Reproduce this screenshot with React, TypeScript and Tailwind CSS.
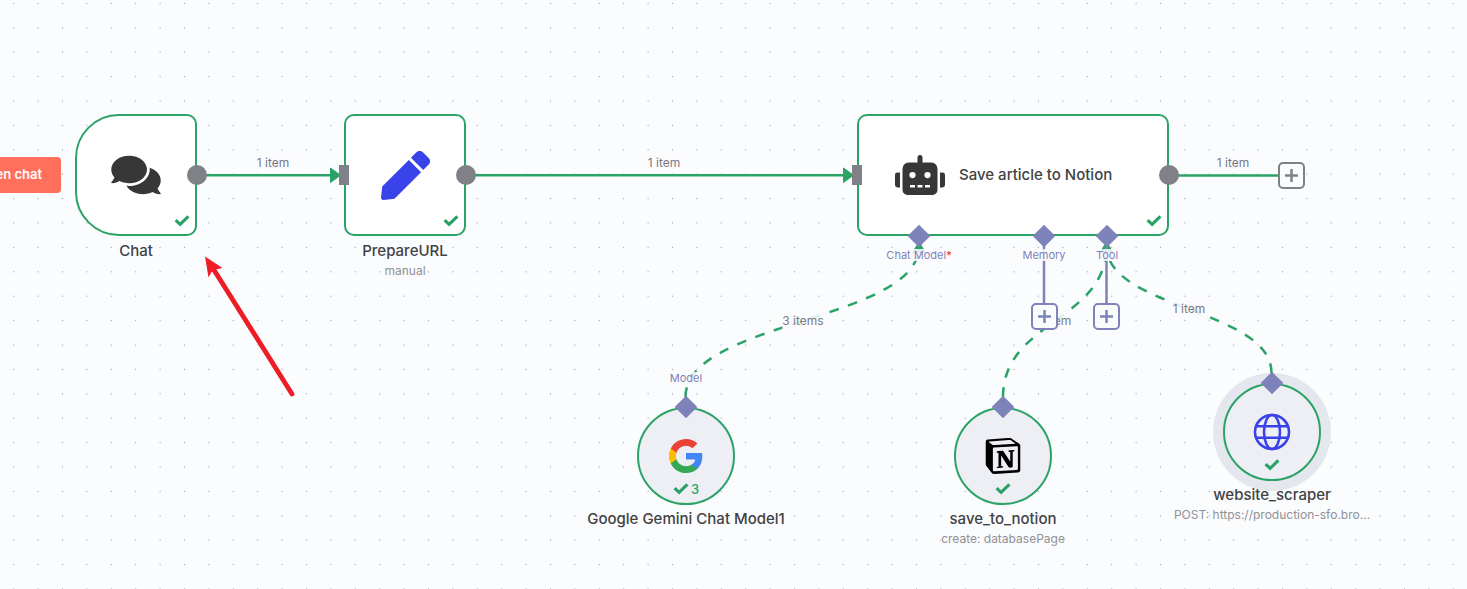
import type { ReactNode } from 'react';
import { FaComments, FaPen, FaRobot } from 'react-icons/fa';
import { SiNotion } from 'react-icons/si';

const GREEN = '#2ba366';

function Check() {
  return (
    <svg className="h-3 w-4" viewBox="0 0 16 12" fill="none" stroke={GREEN} strokeWidth="3.2" aria-hidden="true">
      <path d="M1.6 5.2 6.1 9.4 14.4 1.4" />
    </svg>
  );
}

function GoogleLogo() {
  return (
    <svg className="size-[34px]" viewBox="1 1 22 22" aria-hidden="true">
      <path fill="#4285F4" d="M22.56 12.25c0-.78-.07-1.53-.2-2.25H12v4.26h5.92c-.26 1.37-1.04 2.53-2.21 3.31v2.77h3.57c2.08-1.92 3.28-4.74 3.28-8.09z" />
      <path fill="#34A853" d="M12 23c2.97 0 5.46-.98 7.28-2.66l-3.57-2.77c-.98.66-2.23 1.06-3.71 1.06-2.86 0-5.29-1.93-6.16-4.53H2.18v2.84C3.99 20.53 7.7 23 12 23z" />
      <path fill="#FBBC05" d="M5.84 14.09c-.22-.66-.35-1.36-.35-2.09s.13-1.43.35-2.09V7.07H2.18C1.43 8.55 1 10.22 1 12s.43 3.45 1.18 4.93l2.85-2.22.81-.62z" />
      <path fill="#EA4335" d="M12 5.38c1.62 0 3.06.56 4.21 1.64l3.15-3.15C17.45 2.09 14.97 1 12 1 7.7 1 3.99 3.47 2.18 7.07l3.66 2.84c.87-2.6 3.3-4.53 6.16-4.53z" />
    </svg>
  );
}

function Globe() {
  return (
    <svg className="size-[38px]" viewBox="0 0 38 38" fill="none" stroke="#3a42e9" strokeWidth="2.6" aria-hidden="true">
      <circle cx="19" cy="19" r="17" />
      <ellipse cx="19" cy="19" rx="8" ry="17" />
      <path d="M2.8 13.3h32.4M2.8 24.7h32.4" />
    </svg>
  );
}

function Edges() {
  return (
    <svg className="absolute inset-0 h-full w-full" fill="none" aria-hidden="true">
      <defs>
        <pattern id="dots" x="1.5" y="-8.8" width="24.4" height="24.4" patternUnits="userSpaceOnUse">
          <circle cx="12.2" cy="12.2" r="0.65" fill="#a3a5ab" />
        </pattern>
      </defs>
      <rect width="100%" height="100%" fill="url(#dots)" />
      <g stroke={GREEN} strokeWidth="2.5">
        <path d="M198 175.2H334M466 175.2H846M1169 175.5H1279" />
        <g strokeDasharray="9.76 9.76">
          <path d="M685.5 397C685.5 321 919 321 919 246" />
          <path d="M1003 397C1003 321 1106.5 321 1106.5 246" />
          <path d="M1271.5 373C1271.5 309 1106.5 309 1106.5 246" />
        </g>
      </g>
      <g fill={GREEN} stroke={GREEN} strokeWidth="1" strokeLinejoin="round">
        <path d="M330.5 168v14.5L340.5 175.2ZM843.5 168v14.5L853.5 175.2Z" />
        <path d="M919 242 912.5 252.5H925.5ZM1106.5 242 1100 252.5H1113Z" />
      </g>
      <path d="M1044 240V304M1106.5 240V304" stroke="#7d82b8" strokeWidth="2.5" />
    </svg>
  );
}

function EdgeLabel({ place, children }: { place: string; children: ReactNode }) {
  return (
    <span className={`absolute -translate-x-1/2 -translate-y-1/2 whitespace-nowrap bg-[#fbfcfe]/85 text-xs text-[#77797f] ${place}`}>
      {children}
    </span>
  );
}

function PortLabel({ place, children }: { place: string; children: ReactNode }) {
  return (
    <span className={`absolute -translate-x-1/2 -translate-y-1/2 whitespace-nowrap bg-[#fbfcfe]/85 text-[11px] leading-3 text-[#7d82b8] ${place}`}>
      {children}
    </span>
  );
}

function Diamond({ place }: { place: string }) {
  return <span className={`absolute size-4 -translate-x-1/2 -translate-y-1/2 rotate-45 bg-[#7d82b8] ${place}`} />;
}

function OutPort({ place }: { place: string }) {
  return <span className={`absolute size-5 rounded-full bg-[#7f8187] ${place}`} />;
}

function InPort({ place }: { place: string }) {
  return <span className={`absolute h-5 w-[10px] bg-[#7f8187] ${place}`} />;
}

function AddButton({ label, place }: { label: string; place: string }) {
  return (
    <button
      type="button"
      aria-label={label}
      className={`absolute flex size-[27px] items-center justify-center rounded-[5px] border-2 border-current bg-[#fbfcfe] ${place}`}
    >
      <svg className="size-[13px]" viewBox="0 0 13 13" fill="none" stroke="currentColor" strokeWidth="2.5" aria-hidden="true">
        <path d="M6.5 0v13M0 6.5h13" />
      </svg>
    </button>
  );
}

function Caption({ title, note }: { title: string; note?: string }) {
  return (
    <div className="flex flex-col items-center whitespace-nowrap">
      <h2 className="text-[15px] font-medium leading-5 text-[#414244]">{title}</h2>
      {note && <p className="text-xs leading-5 text-[#8f9197]">{note}</p>}
    </div>
  );
}

function SquareNode({ place, shape, title, note, children }: { place: string; shape: string; title: string; note?: string; children: ReactNode }) {
  return (
    <section className={`absolute flex w-[122px] flex-col items-center gap-[5px] ${place}`}>
      <div className={`relative flex h-[122px] w-full items-center justify-center border-2 border-[#2ba366] bg-white ${shape}`}>
        {children}
        <span className="absolute bottom-[7px] right-[5px]"><Check /></span>
      </div>
      <Caption title={title} note={note} />
    </section>
  );
}

function RoundNode({ place, ring, title, note, count, children }: { place: string; ring?: string; title: string; note?: string; count?: number; children: ReactNode }) {
  return (
    <section className={`absolute flex w-[98px] flex-col items-center gap-1 ${place}`}>
      <div className={`relative flex size-[98px] items-center justify-center rounded-full border-2 border-[#2ba366] bg-[#eeeff5] ${ring ?? ''}`}>
        {children}
        <span className="absolute bottom-[6px] flex h-4 items-center gap-[2px] text-[13px] font-medium leading-4 text-[#2ba366]">
          <Check />
          {count}
        </span>
      </div>
      <Caption title={title} note={note} />
    </section>
  );
}

export default function App() {
  return (
    <main className="relative min-h-screen w-full overflow-hidden bg-[#fbfcfe] font-['Inter',sans-serif]">
      <Edges />

      <button type="button" className="absolute left-[-48px] top-[157px] flex h-9 w-[109px] items-center justify-end whitespace-nowrap rounded bg-[#ff6f5c] pr-[19px] text-[13px] font-semibold text-white">
        Open chat
      </button>

      <SquareNode place="left-[75px] top-[114px]" shape="rounded-l-[44px] rounded-r-[10px]" title="Chat">
        <FaComments className="h-11 w-[50px] text-[#373737]" />
      </SquareNode>
      <SquareNode place="left-[344px] top-[114px]" shape="rounded-[10px]" title="PrepareURL" note="manual">
        <FaPen className="size-[49px] text-[#3a42e9]" />
      </SquareNode>

      <section className="absolute left-[857px] top-[114px] flex h-[122px] w-[312px] items-center gap-[14px] rounded-[10px] border-2 border-[#2ba366] bg-white pl-9">
        <FaRobot className="h-10 w-[50px] text-[#373737]" />
        <h2 className="whitespace-nowrap text-[15px] font-medium leading-5 text-[#414244]">Save article to Notion</h2>
        <span className="absolute bottom-[7px] right-[5px]"><Check /></span>
      </section>

      <RoundNode place="left-[637px] top-[407px]" title="Google Gemini Chat Model1" count={3}>
        <GoogleLogo />
      </RoundNode>
      <RoundNode place="left-[954px] top-[407px]" title="save_to_notion" note="create: databasePage">
        <SiNotion className="size-9 text-black" />
      </RoundNode>
      <RoundNode place="left-[1223px] top-[383px]" ring="shadow-[0_0_0_10px_#e4e7ee]" title="website_scraper" note="POST: https://production-sfo.bro...">
        <Globe />
      </RoundNode>

      <OutPort place="left-[187px] top-[165px]" />
      <InPort place="left-[339px] top-[165px]" />
      <OutPort place="left-[456px] top-[165px]" />
      <InPort place="left-[852px] top-[165px]" />
      <OutPort place="left-[1159px] top-[165px]" />

      <Diamond place="left-[919px] top-[236px]" />
      <Diamond place="left-[1044px] top-[236px]" />
      <Diamond place="left-[1107px] top-[236px]" />
      <Diamond place="left-[686px] top-[407px]" />
      <Diamond place="left-[1003px] top-[407px]" />
      <Diamond place="left-[1272px] top-[383px]" />

      <EdgeLabel place="left-[273px] top-[163px]">1 item</EdgeLabel>
      <EdgeLabel place="left-[664px] top-[163px]">1 item</EdgeLabel>
      <EdgeLabel place="left-[1233px] top-[163px]">1 item</EdgeLabel>
      <EdgeLabel place="left-[803px] top-[321px]">3 items</EdgeLabel>
      <EdgeLabel place="left-[1055px] top-[321px]">1 item</EdgeLabel>
      <EdgeLabel place="left-[1189px] top-[309px]">1 item</EdgeLabel>

      <PortLabel place="left-[919px] top-[255px]">Chat Model<span className="text-[#f5222d]">*</span></PortLabel>
      <PortLabel place="left-[1044px] top-[255px]">Memory</PortLabel>
      <PortLabel place="left-[1107px] top-[255px]">Tool</PortLabel>
      <PortLabel place="left-[686px] top-[378px]">Model</PortLabel>

      <AddButton label="Add node" place="left-[1278px] top-[162px] text-[#7f8187]" />
      <AddButton label="Add memory" place="left-[1031px] top-[303px] text-[#7d82b8]" />
      <AddButton label="Add tool" place="left-[1093px] top-[303px] text-[#7d82b8]" />

      <svg className="absolute left-[200px] top-[250px] h-[150px] w-[100px]" viewBox="0 0 100 150" aria-hidden="true">
        <path d="M14 20 92 144" stroke="#ee1c25" strokeWidth="4.8" strokeLinecap="round" />
        <path d="M5 6.5 22.5 18 15 19.5 11.5 22 8.5 27.5Z" fill="#ee1c25" />
      </svg>
    </main>
  );
}
